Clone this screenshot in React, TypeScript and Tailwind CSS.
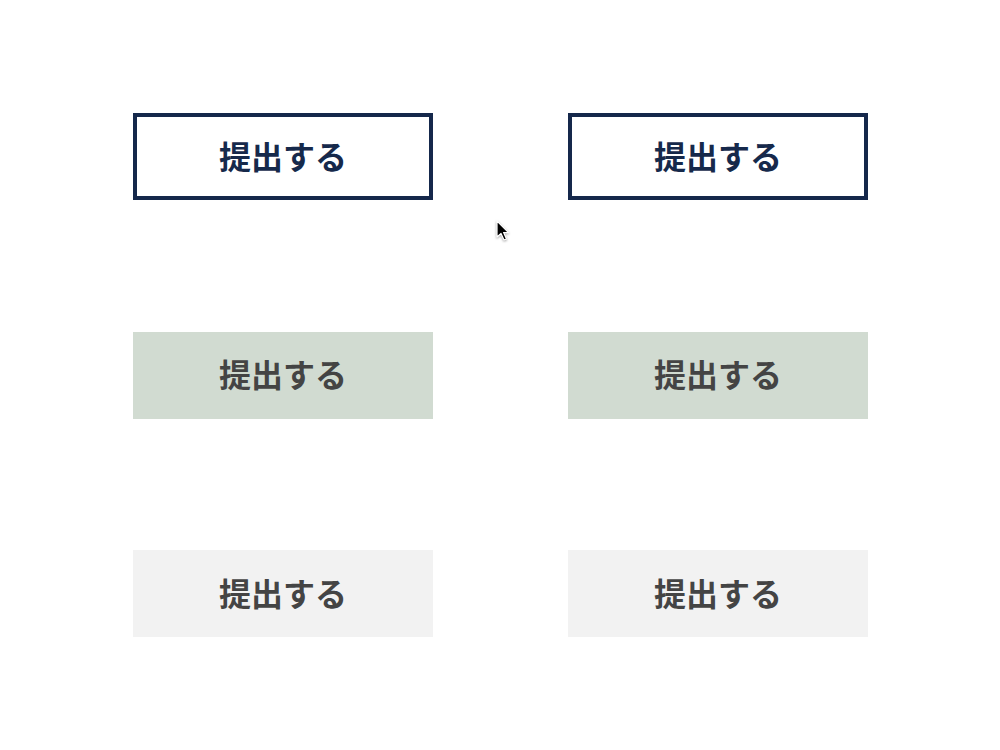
import React from 'react';

/* ─── Static data ─────────────────────────────────────────────── */

const ROWS = [
  'border-4 border-[#15284b] bg-white text-[#16294b]',
  'bg-[#d1dbd1] text-[#444444]',
  'bg-[#f2f2f2] text-[#444444]',
];

/* ─── Pieces ──────────────────────────────────────────────────── */

function SubmitButton({ tone }: { tone: string }) {
  return (
    <button
      type="button"
      className={`w-[300px] h-[87px] pb-[4px] flex items-center justify-center text-[32px] font-bold ${tone}`}
      style={{ fontFamily: '"Noto Sans CJK JP", "Noto Sans", sans-serif' }}
    >
      提出する
    </button>
  );
}

function Cursor() {
  return (
    <svg
      className="absolute left-[496px] top-[220px] drop-shadow-[0_1px_1px_rgba(0,0,0,0.35)]"
      width="14"
      height="22"
      viewBox="0 0 14 22"
    >
      <path
        d="M1 1 L1 17 L5 13.5 L8 20 L10.5 19 L7.6 12.6 L12.5 12.6 Z"
        fill="#000"
        stroke="#fff"
        strokeWidth="1.2"
        strokeLinejoin="round"
      />
    </svg>
  );
}

/* ─── Page ────────────────────────────────────────────────────── */

export default function App() {
  return (
    <div className="relative w-[1000px] h-[750px] bg-white overflow-hidden">
      <div className="grid grid-cols-[300px_300px] gap-x-[135px] gap-y-[131.5px] pl-[133px] pt-[113px]">
        {ROWS.map((tone, i) => (
          <React.Fragment key={i}>
            <SubmitButton tone={tone} />
            <SubmitButton tone={tone} />
          </React.Fragment>
        ))}
      </div>
      <Cursor />
    </div>
  );
}
